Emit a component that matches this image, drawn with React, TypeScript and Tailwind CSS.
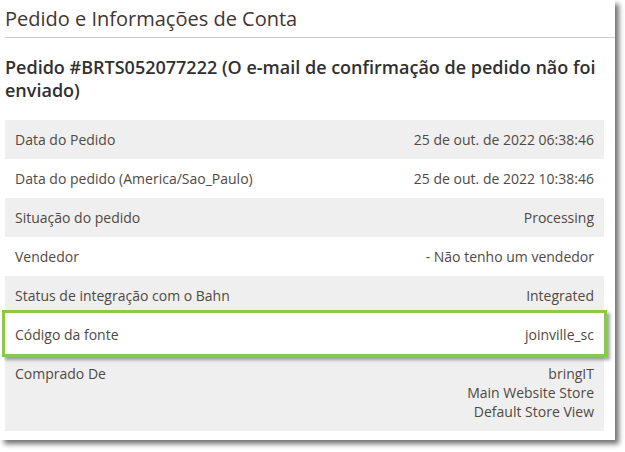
const rows: { label: string; value: string[]; highlight?: boolean }[] = [
  { label: "Data do Pedido", value: ["25 de out. de 2022 06:38:46"] },
  { label: "Data do pedido (America/Sao_Paulo)", value: ["25 de out. de 2022 10:38:46"] },
  { label: "Situação do pedido", value: ["Processing"] },
  { label: "Vendedor", value: ["- Não tenho um vendedor"] },
  { label: "Status de integração com o Bahn", value: ["Integrated"] },
  { label: "Código da fonte", value: ["joinville_sc"], highlight: true },
  { label: "Comprado De", value: ["bringIT", "Main Website Store", "Default Store View"] },
];

export default function App() {
  return (
    <div className="w-[625px] h-[452px] bg-white" style={{ fontFamily: '"Open Sans", sans-serif' }}>
      <div className="w-[615px] h-[440px] bg-white shadow-[4px_4px_5px_rgba(0,0,0,0.55)] pt-[5px] pl-[5px]">
        {/* Section title */}
        <div className="border-b border-[#cccccc] pb-[4px]">
          <h1 className="text-[20px] leading-[28px] font-normal text-[#41362f]">Pedido e Informações de Conta</h1>
        </div>

        <div className="pr-[11px]">
          <h2 className="mt-[18px] mb-[18px] text-[18px] leading-[23px] font-semibold text-[#303030]">
            Pedido #BRTS052077222 (O e-mail de confirmação de pedido não foi enviado)
          </h2>

          {/* Info table */}
          <div className="text-[14px] leading-[19px] text-[#514943]">
            {rows.map((row, idx) => (
              <div
                key={row.label}
                className={`relative flex justify-between px-[10px] py-[10px] ${idx % 2 === 0 ? "bg-[#efefef]" : "bg-white"} ${row.highlight ? "z-10" : ""}`}
              >
                {row.highlight && (
                  <div className="absolute -top-[5px] -bottom-[3px] -left-[3px] -right-[3px] border-[3px] border-[#8cc84b] bg-white shadow-[3px_3px_3px_rgba(0,0,0,0.35)]"></div>
                )}
                <span className="relative">{row.label}</span>
                <span className="relative text-right">
                  {row.value.map((v) => (
                    <div key={v}>{v}</div>
                  ))}
                </span>
              </div>
            ))}
          </div>
        </div>
      </div>
    </div>
  );
}
